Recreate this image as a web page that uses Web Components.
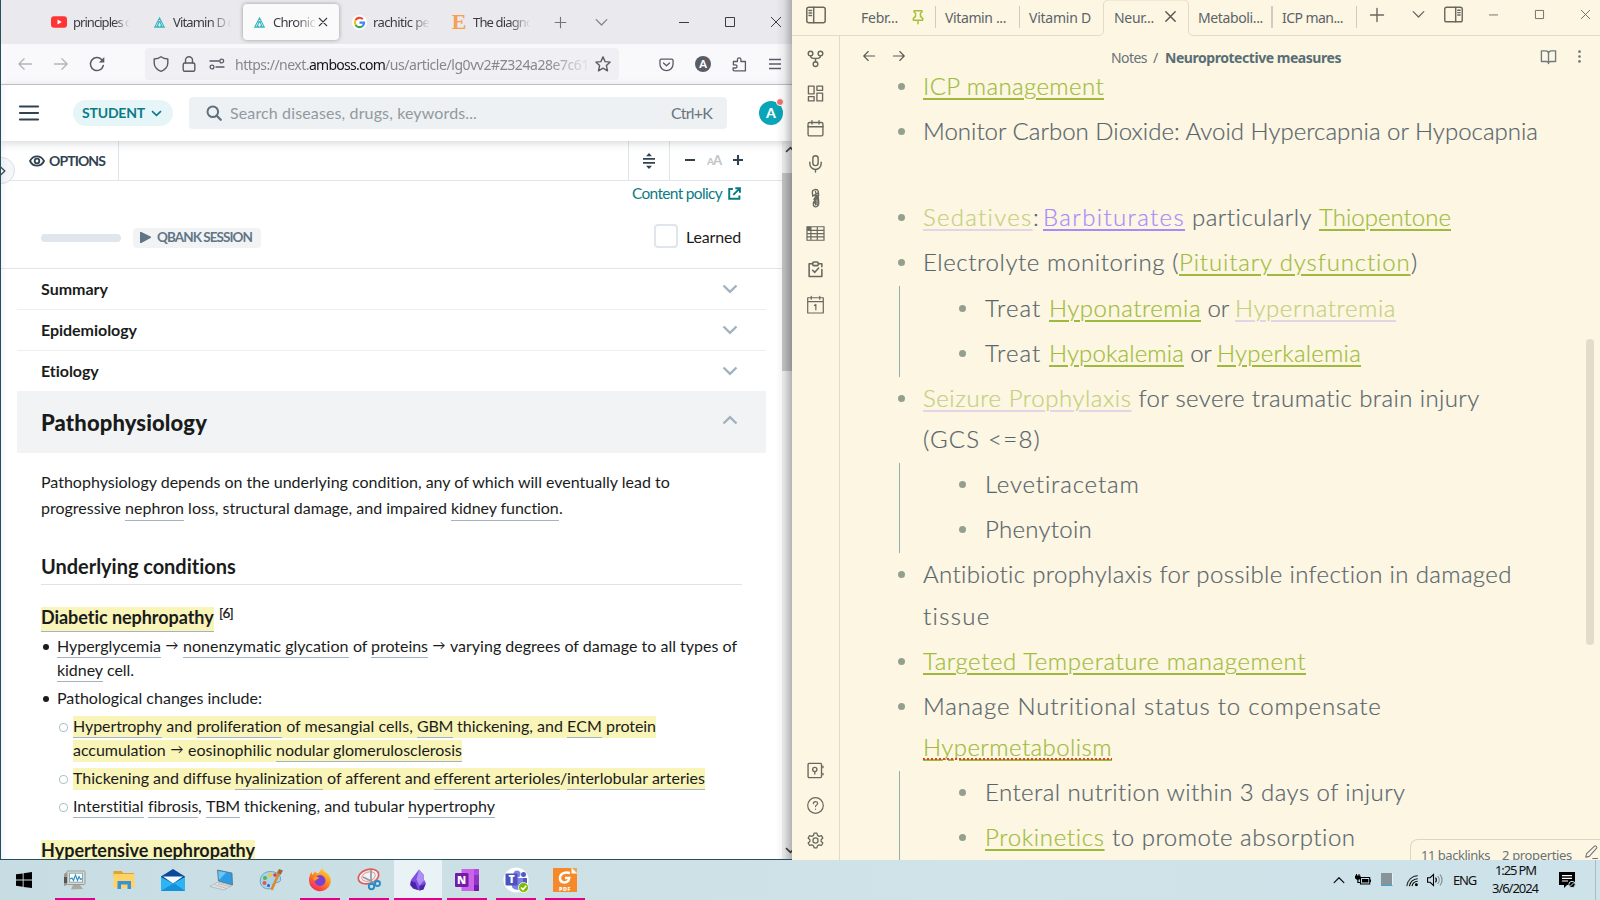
<!DOCTYPE html>
<html lang="en">
<head>
<meta charset="utf-8">
<title>Desktop</title>
<style>
html,body{margin:0;width:1600px;height:900px;overflow:hidden;background:#cde0e6}
</style>
</head>
<body>
<desk-top></desk-top>
<script>
/* ---------- icon set: [viewBox size, body] ---------- */
const OUT='fill="none" stroke="currentColor" stroke-linecap="round" stroke-linejoin="round"';
const I={
back:[16,`<path ${OUT} stroke-width="1.500" d="M15.500 8H1M7 2 1 8 7 14"/>`],
fwd:[16,`<path ${OUT} stroke-width="1.500" d="M.5 8h14.500M9 2 15 8 9 14"/>`],
reload:[16,`<path ${OUT} stroke-width="1.500" d="M14.300 9.500A6.500 6.500 0 1 1 12.700 3.600"/><path fill="currentColor" d="M15.300 1v5.500H9.800z"/>`],
close:[16,`<path ${OUT} stroke-width="1.500" d="m3 3 10 10M13 3 3 13"/>`],
plus:[16,`<path ${OUT} stroke-width="1.400" d="M8 1.500v13M1.500 8h13"/>`],
plusb:[16,`<path stroke="currentColor" stroke-width="3.400" d="M8 0v16M0 8h16"/>`],
minusb:[16,`<path stroke="currentColor" stroke-width="3.200" d="M0 8h16"/>`],
chev:[16,`<path ${OUT} stroke-width="1.600" d="m1.500 4.500 6.500 6.500 6.500-6.500"/>`],
chevu:[16,`<path ${OUT} stroke-width="1.600" d="m1.500 11.500L8 5l6.500 6.500"/>`],
chevb:[16,`<path fill="none" stroke="currentColor" stroke-width="2.400" d="m1.500 4.500 6.500 6.300 6.500-6.300"/>`],
chevub:[16,`<path fill="none" stroke="currentColor" stroke-width="2.400" d="m1.500 11.500L8 5.200l6.500 6.300"/>`],
chevr:[16,`<path ${OUT} stroke-width="2" d="m4 1.500 7 6.500-7 6.500"/>`],
min:[10,`<path stroke="currentColor" d="M0 5.500h10"/>`],
max:[10,`<path fill="none" stroke="currentColor" d="M.5.500h9v9h-9z"/>`],
x:[10,`<path stroke="currentColor" stroke-width="1" d="m0 0 10 10M10 0 0 10"/>`],
yt:[16,`<rect y="2.200" width="16" height="11.600" rx="3" fill="#ff3434"/><path fill="#fff" d="m6.500 5.500 4.300 2.500-4.300 2.500z"/>`],
amb:[12,`<path fill="none" stroke="#35b5bd" stroke-width="1.200" d="M6 1 .8 11h10.400zM6 4.500 3 11M6 4.500 9 11M3.700 8.500 5 11M8.300 8.500 7 11M4.500 5.500h3"/>`],
goog:[16,`<circle cx="8" cy="8" r="8" fill="#fff"/><g fill="none" stroke-width="2.300"><path stroke="#ea4335" d="M3.800 5.400a4.900 4.900 0 0 1 7.700-1"/><path stroke="#fbbc05" d="M3.800 10.600a5 5 0 0 1 0-5.200"/><path stroke="#34a853" d="M11.300 11.700a4.900 4.900 0 0 1-7.500-1.100"/><path stroke="#4285f4" d="M8 8.100h4.900a4.900 4.900 0 0 1-1.600 3.600"/></g>`],
enc:[16,`<text x="8" y="15" text-anchor="middle" font-family="Liberation Serif,serif" font-size="22" font-weight="bold" fill="#f6a050">E</text>`],
shield:[16,`<path ${OUT} stroke-width="1.400" d="M8 .8C6 2.300 3.500 2.900 1.200 3v4.200C1.200 11 4.500 14.300 8 15.300c3.500-1 6.800-4.300 6.800-8.100V3C12.500 2.900 10 2.300 8 .8z"/>`],
lock:[16,`<rect ${OUT} stroke-width="1.400" x="2.200" y="7" width="11.600" height="8.300" rx="1.500"/><path ${OUT} stroke-width="1.400" d="M4.500 7V4.200a3.500 3.500 0 0 1 7 0V7"/>`],
tune:[16,`<g ${OUT} stroke-width="1.300"><path d="M1 5h9M7 11h8"/><circle cx="12.700" cy="5" r="1.900"/><circle cx="3" cy="11" r="1.900"/></g>`],
star:[16,`<path ${OUT} stroke-width="1.400" d="m8 .9 2.100 4.700 5.100.5-3.800 3.500 1.100 5.200L8 12.200l-4.500 2.600 1.100-5.200L.8 6.100l5.100-.5z"/>`],
pocket:[16,`<g ${OUT} stroke-width="1.400"><path d="M2.500 2.200h11c.8 0 1.500.6 1.500 1.400v3.900a7 7 0 0 1-14 0V3.600c0-.8.700-1.400 1.500-1.400z"/><path d="m4.800 6.400 3.200 3 3.200-3"/></g>`],
acct:[16,`<circle cx="8" cy="8" r="8" fill="currentColor"/><text x="8" y="12" text-anchor="middle" font-family="Lato,sans-serif" font-weight="900" font-size="11" fill="#fff">A</text>`],
puz:[16,`<path ${OUT} stroke-width="1.400" d="M1.500 4.800h4.300V2.700a1.800 1.800 0 0 1 3.700 0v2.100h4.800v10H2.500c-.8 0-1.300-.5-1.300-1.200v-1.900h2.500a1.600 1.600 0 0 0 0-3.300H1.500z"/>`],
burg:[12,`<path stroke="currentColor" stroke-width="1.300" d="M0 1.500h12M0 6h12M0 10.500h12"/>`],
burg2:[20,`<path stroke="currentColor" stroke-width="2.200" stroke-linecap="round" d="M1 3.500h18M1 10h18M1 16.500h18"/>`],
search:[16,`<circle cx="6.800" cy="6.800" r="5.300" fill="none" stroke="currentColor" stroke-width="2"/><path stroke="currentColor" stroke-width="2.300" stroke-linecap="round" d="m11 11 3.700 3.700"/>`],
eye:[16,`<path fill="none" stroke="currentColor" stroke-width="1.800" d="M1 8c1.500-3 4.200-4.700 7-4.700S13.500 5 15 8c-1.500 3-4.200 4.700-7 4.700S2.500 11 1 8z"/><circle cx="8" cy="8" r="2.300" fill="none" stroke="currentColor" stroke-width="1.800"/>`],
sort:[16,`<path stroke="currentColor" stroke-width="1.700" d="M2 5.900h12M2 9.900h12"/><path fill="currentColor" d="M8 0 5 3.200h6zM8 16l-3-3.200h6z"/>`],
ext:[16,`<g fill="none" stroke="currentColor" stroke-width="2.400"><path d="M6 2.500H1.500v12h12.500v-4M9 1.500h5.700V7M14.500 1.700 6.500 9.700"/></g>`],
play:[12,`<path fill="currentColor" d="M0 0h1.500L12 5.300v1L1.500 12H0z"/>`],
lpan:[20,`<g ${OUT} stroke-width="1.500"><rect x=".8" y="2.300" width="18.400" height="15.400" rx="2"/><path d="M7.700 2.300v15.400M3 5.500h2.500M3 8h2.500M3 10.500h2.500"/></g>`],
rpan:[20,`<g ${OUT} stroke-width="1.500"><rect x=".8" y="2.300" width="18.400" height="15.400" rx="2"/><path d="M12.300 2.300v15.400M14.500 5.500H17M14.500 8H17M14.500 10.500H17"/></g>`],
pin:[24,`<path ${OUT} stroke-width="2.200" d="M12 17v5M6 2.500h12v2l-2.300 1.500v5L19 14v3H5v-3l3.300-3V6L6 4.500z"/>`],
book:[24,`<path ${OUT} stroke-width="1.900" d="M2 4h6a4 4 0 0 1 4 3.500A4 4 0 0 1 16 4h6v15h-7a3 3 0 0 0-3 3 3 3 0 0 0-3-3H2zM12 7.500V22"/>`],
dots:[24,`<g fill="currentColor"><circle cx="12" cy="3" r="2.500"/><circle cx="12" cy="12" r="2.500"/><circle cx="12" cy="21" r="2.500"/></g>`],
fork:[24,`<g ${OUT} stroke-width="2"><circle cx="5" cy="5" r="3.300"/><circle cx="19" cy="5" r="3.300"/><circle cx="12" cy="20" r="3.300"/><path d="M5 8.300c0 3 2 3.700 7 3.700s7-.7 7-3.700M12 12v4.500"/></g>`],
dash:[24,`<g ${OUT} stroke-width="1.900"><path d="M2 1.500h8v11H2zM14 1.500h8v6h-8zM14 11.500h8v11h-8zM2 16.500h8v6H2z"/></g>`],
cal:[24,`<g ${OUT} stroke-width="1.900"><rect x="1.500" y="3.500" width="21" height="19" rx="2"/><path d="M1.500 9.500h21M7 .8v5M17 .8v5"/></g>`],
mic:[24,`<g ${OUT} stroke-width="2"><rect x="8.300" y="1" width="7.400" height="14" rx="3.700"/><path d="M4 10v2.500a8 8 0 0 0 16 0V10M12 20.500V24"/></g>`],
knot:[24,`<g ${OUT} stroke-width="1.700"><path d="M8.500 9 8 4C8 .500 14-1 15.500 3L16 8l-6 8c-2 3-.5 7 2.500 6.500s4-3 3.500-6L15.500 9M12 3 14 13M8.500 9l7-4M10 13l6-6M12 9l-2 9M12 15v5M14 12v8"/></g>`],
table:[24,`<g fill="none" stroke="currentColor" stroke-width="1.700"><path d="M0 2.500h24v19H0zM0 7.500h24M0 12.200h24M0 16.800h24M5.500 2.500v19M14.500 2.500v19"/></g><path fill="currentColor" d="M0 2.500h5.500v5H0z"/>`],
clip:[24,`<g ${OUT} stroke-width="2.200"><path d="M8 4H3v18h18V12M16 4h5v4"/><rect x="8" y="1.500" width="8" height="5" rx="2"/><path d="m8 13 3 3 5.500-6"/></g>`],
cal1:[24,`<g ${OUT} stroke-width="1.700"><path d="M1 2.500h22v21.500H1zM1 8h22M6 .5v4M18 .5v4M10.500 13.500 12.500 12v7.500"/></g>`],
vault:[24,`<g ${OUT} stroke-width="1.900"><rect x="1.500" y="2" width="19" height="20" rx="1.500"/><circle cx="11" cy="10.500" r="3"/><path d="M11 13.500V17M22.500 6v2M22.500 16v2"/></g>`],
help:[24,`<g ${OUT} stroke-width="1.700"><circle cx="12" cy="12" r="11"/><path d="M9 9.500C9 5.500 15 5.800 15 9c0 2.300-3 2.300-3 4.500M12 17v.3"/></g>`],
gear:[24,`<g ${OUT} stroke-width="1.800"><circle cx="12" cy="12" r="3.600"/><path d="M10 1.500h4l.8 3.300 2.300 1.300 3.300-.9 2 3.400-2.500 2.300v2.400l2.500 2.300-2 3.400-3.300-.9-2.300 1.300L14 22.500h-4l-.8-3.100-2.300-1.300-3.300.9-2-3.400 2.500-2.300v-2.400L1.600 8.600l2-3.400 3.300.9 2.300-1.300z"/></g>`],
pen:[16,`<path ${OUT} stroke-width="1.200" d="m2 14 1-4.200L12 1.200c1-1 3.500 1.200 2.500 2.400L6 13zM10 15.400h5.500"/>`],
/* taskbar */
win:[24,`<path fill="#000" d="M4 6.300 10.700 5.400V11.600H4zM11.600 5.200 20 4v7.600h-8.400zM4 12.500h6.700v6.200L4 17.800zM11.600 12.500H20V20l-8.400-1.100z"/>`],
mon:[24,`<path fill="#9a9a94" d="M1 6l3-2v13l-3 1z"/><rect x="4" y="3" width="18" height="13.500" rx="1" fill="#d9dad6" stroke="#9b9c98"/><rect x="6.500" y="5.200" width="13" height="9" fill="#f5fbff" stroke="#8aa"/><path fill="none" stroke="#2b8cbe" stroke-width="1.100" d="m7 11 2-1 1.500 2.500L12.500 7l2 5.500 1.500-4 1.500 3 1.500-1"/><path fill="#aaa9a4" d="M10 17h7l3 4-12 .5z"/><path fill="#555" d="M1 9h3v6H1z"/>`],
fold:[24,`<path fill="#e0a32c" d="M1.500 3h8l2 2H22v4H1.500z"/><path fill="#ffd466" d="M1.500 6H22.500v14H1.500z"/><path fill="#3a91d8" d="M5.500 13h13.500v8h-3.500v-4.500h-6.500V21H5.500z"/>`],
mail:[24,`<path fill="#0a4a9a" d="M12 1 24 8.500v2L12 16 0 10V8.500z"/><path fill="#f6f9fc" d="M2 8.500h20l-10 7z"/><path fill="#2fb4f3" d="M0 9 12 15.500l12-6.500V23H0z"/><path fill="#1590dc" d="m0 23 13-8 11 8z"/>`],
lap:[24,`<path fill="#2c9be8" stroke="#566" stroke-width=".7" d="m7.500 2 14.500 3 .5 12L8.500 13z"/><path fill="#6cc5f8" d="m8.200 3 8 1.600L9 12z"/><path fill="#dfe3e6" stroke="#999" stroke-width=".5" d="m8 14 14 3.500-8 4.500L0 18.500z"/><path stroke="#aaa" stroke-width=".7" d="m5 17 12 3.500M8 15.700l12 2.800"/>`],
paint:[24,`<path fill="#a9d3ea" stroke="#5f95b5" stroke-width=".8" d="M11.500 3.500C4 3.500.8 9 1.200 14c.3 5 6 8 10.500 6.500 3-1 1-3.500 3-5s7 0 7-4.500-5-7.500-10.200-7.500z"/><circle cx="6" cy="10" r="2" fill="#4db848"/><circle cx="11" cy="7" r="2" fill="#f7c92e"/><circle cx="16" cy="7" r="1.800" fill="#e33b32"/><circle cx="5.500" cy="15" r="2" fill="#e9573c"/><circle cx="9.500" cy="17.500" r="1.500" fill="#345ccc"/><path stroke="#dc8a2b" stroke-width="2.500" stroke-linecap="round" d="m13 21 6.500-15"/><path fill="#a0673a" d="M18 4.500 20 1 24 2.500 21.500 7z"/>`],
ff:[24,`<defs><linearGradient id="f" x1=".9" y1="0" x2=".3" y2="1"><stop offset="0" stop-color="#ffe14a"/><stop offset=".5" stop-color="#ff8a1e"/><stop offset="1" stop-color="#f3235c"/></linearGradient></defs><path fill="url(#f)" d="M14 0c1 3 4 4 6 6 2 2.500 3.500 5 2.500 9.500A11 11 0 0 1 1 13C.8 9 2 6 3.500 4l1 3L7 3.500l2.500 2.300c1-.5 3-2.800 4.500-5.800z"/><circle cx="12" cy="12.500" r="5.400" fill="#7a3fd3"/><path fill="#ff9d1f" d="M5.500 10c2-2 4.500-1.500 6 .300-1.500.2-3 1-3.500 2-.6 1.300-2.500 0-2.500-2.300z"/>`],
snip:[24,`<ellipse cx="11.500" cy="8.500" rx="10.500" ry="7" fill="#f6f1f1" stroke="#d95e5e" stroke-width="1.700" transform="rotate(-18 11.500 8.500)"/><ellipse cx="11.500" cy="8.500" rx="7" ry="4.500" fill="none" stroke="#d99" transform="rotate(-18 11.500 8.500)"/><path stroke="#8f9ba3" stroke-width="1.700" d="M14 2v13M6 9l12 6"/><circle cx="14.500" cy="18.500" r="2.700" fill="none" stroke="#2a8bc9" stroke-width="1.900"/><circle cx="20.500" cy="15.500" r="2.500" fill="none" stroke="#2a8bc9" stroke-width="1.900"/>`],
obs:[24,`<path fill="#7c4fe0" d="m13 1.500 4.500 5 .5 5 2 4-3 6-3.500 1-6.500-2-3-3.500 1-5L8 8z"/><path fill="#b08cf5" d="m13 1.500-2.500 10 3 6 4.500-5-.5-6z"/><path fill="#4b25a5" d="m5 13 4.500 1.500L12 22l-4.500-1.500-3-3.500zM13.500 18l6-2-2 5.500-4 1z"/>`],
one:[24,`<path fill="#ca64ea" d="M6.500 1H24v22H6.500z"/><path fill="#9332bf" d="M19 6.500h5V17h-5z"/><path fill="#7719aa" d="M19 17h5v6h-5z"/><path fill="#ad4be0" d="M19 1h5v5.500h-5z"/><rect y="5" width="13.500" height="14" rx="1" fill="#7719aa"/><text x="6.700" y="16" text-anchor="middle" font-family="Open Sans,sans-serif" font-weight="800" font-size="11" fill="#fff">N</text>`],
teams:[26,`<circle cx="13" cy="13" r="12.500" fill="#fff"/><circle cx="14" cy="7" r="3.500" fill="#7b83eb"/><circle cx="20.500" cy="7.500" r="2.500" fill="#5059c9"/><path fill="#5059c9" d="M16 11h8v6c0 4-6 5-8 2z"/><path fill="#7b83eb" d="M8 11h12v8c0 5-11 5-11 0z"/><rect x="2.500" y="6.500" width="12" height="12" rx="1" fill="#4b53bc"/><text x="8.500" y="16.200" text-anchor="middle" font-family="Open Sans,sans-serif" font-weight="800" font-size="10.500" fill="#fff">T</text><circle cx="20.500" cy="20.500" r="5" fill="#7fba00" stroke="#fff" stroke-width=".8"/><path fill="none" stroke="#fff" stroke-width="1.600" d="m18 20.500 2 2 3.200-3.800"/>`],
foxit:[24,`<path fill="#f6892a" d="M0 0h18l6 6v18H0z"/><path fill="#fff" d="m18.500 0 5.500 5.500h-5.500z"/><path fill="#f9a04f" d="M19 0h5v5z"/><path fill="none" stroke="#fff" stroke-width="2.400" d="M17 5C10 3 6.500 7 7 11c.5 4 6.500 4.500 8.500 1.500L16.200 10H12"/><text x="12" y="22.500" text-anchor="middle" font-family="Open Sans,sans-serif" font-weight="800" font-size="5.500" letter-spacing=".5" fill="#fff">PDF</text>`],
batt:[16,`<path fill="none" stroke="#000" stroke-width="1.100" d="M5.500 5.500h9.200v6.500H5.500z"/><path fill="#000" d="M7 7h6.400v3.500H7zM15 7.500h1v2.500h-1zM0 3.500h5.500v2c0 1.500-1 2.200-2 2.200V10h2v1H2.300V7.700C1 7.500 0 7 0 5.500zM1 2h1v2H1zM3.500 2h1v2h-1z"/>`],
wifi:[16,`<g fill="none" stroke="#000" stroke-width="1.200"><path d="M2 15A13 13 0 0 1 14.500 3" opacity=".8"/><path d="M5 15a10 10 0 0 1 9.500-8.500M8 15a7 7 0 0 1 6.500-5.500"/></g><circle cx="13" cy="13.500" r="1.700"/>`],
spk:[16,`<path fill="none" stroke="#000" stroke-width="1.100" d="M.6 5.700h2.500L6.500 2.500v11L3.100 10.300H.6z"/><g fill="none" stroke="#000" stroke-width="1.100"><path d="M8.500 5.700c1 1.300 1 3.300 0 4.600"/><path d="M10.700 4c2 2.300 2 5.700 0 8M13 2.500c2.700 3 2.700 8 0 11" opacity=".4"/></g>`],
note:[16,`<path fill="#000" d="M0 0h16v13H8l-3 3v-3H0z"/><path stroke="#fff" stroke-width="1.200" d="M3 3.600h10M3 6.300h10M3 9h6"/><circle cx="13" cy="12.500" r="3.200" fill="#000" stroke="#cde0e6"/><path stroke="#cde0e6" d="m11 14.500 4-4"/>`]
};
class UiIcon extends HTMLElement{
  connectedCallback(){
    if(this.shadowRoot)return;
    const [v,b]=I[this.getAttribute('n')],s=this.getAttribute('s')||16;
    this.attachShadow({mode:'open'}).innerHTML=`<style>:host{display:block;flex:none;width:${s}px;height:${s}px}svg{display:block;overflow:visible}</style><svg width="${s}" height="${s}" viewBox="0 0 ${v} ${v}">${b}</svg>`;
  }
}
/* A run of text spread evenly over the width given in "w". */
class FitRun extends HTMLElement{
  connectedCallback(){
    if(this.shadowRoot)return;
    const w=+this.getAttribute('w');
    this.attachShadow({mode:'open'}).innerHTML=`<style>:host{display:block;flex:none;width:${w}px;white-space:pre}span{text-decoration:var(--deco,none);text-underline-offset:var(--off,3px)}</style><span><slot></slot></span>`;
    const sp=this.shadowRoot.querySelector('span'),n=[...this.textContent].length;
    sp.style.letterSpacing=((w-sp.getBoundingClientRect().width)/n)+'px';
  }
}
const t=(w,s,st='',c='')=>`<fit-run w="${w}" class="${c}" style="${st}">${s}</fit-run>`;
const ic=(n,s,st='')=>`<ui-icon n="${n}" s="${s}" style="${st}"></ui-icon>`;
/* Flex children with the gaps between their left edges: [start, width, markup] */
const row=(x0,items)=>{let p=x0;return items.map(([x,w,h])=>{const m=x-p;p=x+w;return `<div style="flex:none;width:${w}px;margin-left:${m}px">${h}</div>`}).join('')};
const def=(name,css,html)=>customElements.define(name,class extends HTMLElement{
  constructor(){super();this.attachShadow({mode:'open'}).innerHTML=`<style>:host{display:block;box-sizing:border-box}*{box-sizing:border-box}${css}</style>${html}`}
});

const fade=(a,b)=>`-webkit-mask-image:linear-gradient(90deg,#000 ${a}%,transparent ${b}%);mask-image:linear-gradient(90deg,#000 ${a}%,transparent ${b}%)`;
def('fx-tabs',`:host{height:44px;background:#eae9ee;display:flex;align-items:center;font:13px/20px "Noto Sans",sans-serif;color:#3c3b44;position:relative}
 .act{display:flex;align-items:center;width:96px;height:36px;border-radius:4px;background:#fafafb;box-shadow:0 0 4px rgba(0,0,0,.35)}`,
 row(1,[[51,16,ic('yt',16)],[73,59,t(59,'principles o',fade(70,96))],[154,11,ic('amb',11)],[173,60,t(60,'Vitamin D c',fade(62,98))],
 [243,96,`<div class="act">${row(243,[[254,11,ic('amb',11)],[273,44,t(42,'Chronic',fade(55,106))],[317,12,ic('close',12)]])}</div>`],
 [352,15,ic('goog',15)],[373,59,t(59,'rachitic pel',fade(65,96))],[451,16,ic('enc',16)],[473,60,t(60,'The diagno',fade(60,96))],
 [554,13,ic('plus',13,'color:#75747c')],[595,13,ic('chev',13,'color:#85848c')],[679,10,ic('min',10)],[725,10,ic('max',10)],[771,10,ic('x',10)]]));
def('fx-toolbar',`:host{height:41px;background:#f9f9fb;border-bottom:1px solid #c6c6ca;display:flex;align-items:center;color:#5b5b66}
 .url{display:flex;align-items:center;height:32px;background:#f0eff4;border-radius:4px}.u{display:flex;color:#86868f;font:14px/20px "Noto Sans",sans-serif;padding-top:2px}`,
 row(1,[[18,14,ic('back',14,'color:#b4b4ba')],[54,14,ic('fwd',14,'color:#b4b4ba')],[89,16,ic('reload',16)],
 [145,474,`<div class="url">${row(145,[[153,16,ic('shield',16)],[181,16,ic('lock',16)],[209,16,ic('tune',16)],
 [235,354,`<div class="u" style="${fade(88,101)}">${t(74,'https://next.')}${t(76,'amboss.com','color:#15141a')}${t(204,'/us/article/lg0vv2#Z324a28e7c61')}</div>`],[595,16,ic('star',16)]])}</div>`],
 [659,15,ic('pocket',15)],[695,16,ic('acct',16)],[732,15,ic('puz',15)],[769,12,ic('burg',12)]]));
def('am-header',`:host{height:56px;background:#fff;display:flex;align-items:center;font:16px/20px Lato,sans-serif;color:#314351;box-shadow:0 2px 8px rgba(60,70,80,.22);position:relative;z-index:2}
 .pill{display:flex;align-items:center;height:26px;border-radius:13px;background:#e6f6f8;color:#0b7c86;font-weight:700;font-size:14px}
 .s{display:flex;align-items:center;height:32px;border-radius:4px;background:#edf1f4;color:#93999e}
 .av{width:24px;height:24px;border-radius:12px;background:#0aa5b8;color:#fff;font:900 14px/24px Lato,sans-serif;text-align:center;position:relative}
 .av i{position:absolute;right:-1px;top:-3px;width:6px;height:6px;border-radius:5px;background:#f0716f;border:1.500px solid #fff;box-sizing:content-box}`,
 row(1,[[19,20,ic('burg2',20)],[73,100,`<div class="pill">${row(73,[[82,62,t(63,'STUDENT')],[151,11,ic('chevb',11)]])}</div>`],
 [189,538,`<div class="s">${row(189,[[206,16,ic('search',16,'color:#5c7080')],[230,247,t(247,'Search diseases, drugs, keywords...')],[671,42,t(41,'Ctrl+K','color:#69747e;margin-top:-1px')]])}</div>`],
 [759,24,`<div class="av">A<i></i></div>`]]));
def('am-options',`:host{height:40px;border-bottom:1px solid #dfe5ea;display:flex;background:#fff;font:700 14px/20px Lato,sans-serif;color:#314351;position:relative}
 div{display:flex;align-items:center}.a{width:118px;border-right:1px solid #dfe5ea}.b{margin-left:509px;width:42px;border-left:1px solid #dfe5ea;border-right:1px solid #dfe5ea;justify-content:center}
 .aa{color:#bfc7cd;font-weight:900;align-items:baseline;line-height:16px}
 .k{position:absolute;left:-13px;top:16px;width:27px;height:27px;border:1px solid #d8dee4;border-radius:14px;background:#f4f6f8;justify-content:flex-end;padding-right:6px;z-index:3}`,
 `<div class="a">${row(1,[[29,15,ic('eye',16)],[49,56,t(56,'OPTIONS')]])}</div><div class="b">${ic('sort',16)}</div>
 <div>${row(670,[[685,10,ic('minusb',10,'margin-bottom:1px')],[707,14,`<div class="aa"><span style="font-size:10px">A</span><span style="font-size:13px;margin-left:-1px">A</span></div>`],[733,10,ic('plusb',10,'margin-bottom:1px')]])}</div>
 <div class="k">${ic('chevr',10)}</div>`);
def('acc-item',`:host{display:flex;height:41px;border-bottom:1px solid #eceff1;align-items:center;justify-content:space-between;padding:0 28px 0 24px;font:700 16px/20px Lato,sans-serif;color:#1a1c1c}
 :host([open]){height:62px;background:#f2f3f5;border:0;font-weight:900;font-size:22px;padding-top:2px}:host([last]){height:40px;border:0}
 .c{color:#a3b2bf}:host([open]) .c{margin-bottom:7px}:host([open]) .d,.e{display:none}:host([open]) .e{display:block}`,
 `<slot></slot><span class="c"><span class="d">${ic('chevb',16)}</span><span class="e">${ic('chevub',16)}</span></span>`);
const L=(w,s)=>t(w,s,'','l');
const A='<span style="display:flex;width:22px;justify-content:center;font:13px/19px Lato,sans-serif"> → </span>';
def('am-article',`:host{height:678px;overflow:hidden;background:#fff;font:16px/19px Lato,sans-serif;color:#1a1c1c;width:781px}
 .pol{height:26px;display:flex;align-items:center;color:#0b7c86;font-size:15.500px;padding-bottom:2px}.q{height:62px;display:flex;align-items:center;border-bottom:1px solid #e0e6ea}
 .bar{height:8px;border-radius:4px;background:#e0e6eb}.qb{height:20px;border-radius:4px;background:#f2f3f5;display:flex;align-items:center;font-weight:700;font-size:13.500px;color:#607585}
 .ck{width:24px;height:24px;border:2px solid #e0e6eb;border-radius:4px;margin-bottom:3px}.sec{padding:0 16px}
 .p{display:flex;padding:3px 0 0 24px;height:26px}.l{box-shadow:inset 0 -1px #a3b3c2}
 .h{display:flex}.h fit-run,.h span{background-color:#f9f4b8}
 h2{margin:0 24px;height:64px;padding-top:32px;font:700 20px/26px Lato,sans-serif;border-bottom:1px solid #dfe3e6}
 h3{margin:22px 0 0 24px;height:25px;display:flex;font:700 18px/21px Lato,sans-serif}
 .li{display:flex;height:24px;padding:2px 0 0 40px;position:relative}.s{padding-left:56px}.g{margin-top:4px}
 .li[b]::before,.o::before{content:"";width:6px;height:6px;border-radius:3px;background:#1a1c1c;position:absolute;left:26px;top:10px}
 .li.o::before{background:none;border:1px solid #9fb0bd;left:42px;width:7px;height:7px;border-radius:4px;top:9px;opacity:.8}`,
 `<div class="pol">${row(1,[[632,90,t(90,'Content policy')],[728,13,ic('ext',13)]])}</div>
 <div class="q">${row(1,[[41,80,'<div class="bar"></div>'],[133,128,`<div class="qb">${row(133,[[140,11,ic('play',11)],[157,95,t(95,'QBANK SESSION')]])}</div>`],[654,24,'<div class="ck"></div>'],[686,55,t(55,'Learned','margin-bottom:3px')]])}</div>
 <div class="sec"><acc-item>${t(67,'Summary')}</acc-item><acc-item>${t(96,'Epidemiology')}</acc-item><acc-item last>${t(58,'Etiology')}</acc-item><acc-item open>${t(166,'Pathophysiology')}</acc-item>
 <div class="p" style="margin-top:16px">${t(629,'Pathophysiology depends on the underlying condition, any of which will eventually lead to')}</div>
 <div class="p">${t(84,'progressive ')}${L(59,'nephron')}${t(267,' loss, structural damage, and impaired ')}${L(108,'kidney function')}${t(4,'.')}</div>
 <h2>${t(195,'Underlying conditions')}</h2>
 <h3><span class="h">${L(173,'Diabetic nephropathy')}</span>${t(14,'[6]','font:500 13.500px/13px Lato,sans-serif;margin-left:5px;-webkit-text-stroke:.2px')}</h3>
 <div class="li" b style="margin-top:2px">${L(104,'Hyperglycemia')}${A}${L(166,'nonenzymatic glycation')}${t(22,' of ')}${L(57,'proteins')}${A}${t(287,'varying degrees of damage to all types of')}</div>
 <div class="li">${L(46,'kidney')}${t(31,' cell.')}</div>
 <div class="li g" b>${t(205,'Pathological changes include:')}</div>
 <div class="li s o g h">${L(89,'Hypertrophy')}${t(34.500,' and ')}${L(85.500,'proliferation')}${t(135,' of mesangial cells, ')}${L(36,'GBM')}${t(114,' thickening, and ')}${L(35,'ECM')}${t(54,' protein')}</div>
 <div class="li s h">${t(93,'accumulation')}${A}${t(88,'eosinophilic ')}${L(186,'nodular glomerulosclerosis')}</div>
 <div class="li s o g h">${t(162,'Thickening and diffuse ')}${L(88,'hyalinization')}${t(111,' of afferent and ')}${L(126,'efferent arterioles')}${t(7,'/')}${L(138,'interlobular arteries')}</div>
 <div class="li s o g">${L(71,'Interstitial')}${t(4,' ')}${L(50,'fibrosis')}${t(8,', ')}${L(34,'TBM')}${t(168,' thickening, and tubular ')}${L(87,'hypertrophy')}</div>
 <h3 class="h" style="margin-top:22px">${t(214,'Hypertensive nephropathy')}</h3></div>`);
def('fx-window',`:host{width:792px;height:860px;border-left:1px solid #24505f;border-bottom:1px solid #24505f;position:relative;overflow:hidden;background:#fff}
 .m{display:flex}.m>div{flex:none;width:781px}.sb{width:10px;height:718px;background:#f0f0f0;padding-top:32px;position:relative}.sb i{display:block;height:198px;background:#c6c6c6}
 .sb ui-icon{position:absolute;left:3px;color:#444}.sh{position:absolute;z-index:5;right:0;top:0;width:16px;height:860px;background:linear-gradient(90deg,transparent,rgba(0,0,0,.06) 50%,rgba(0,0,0,.26))}
 .sl{position:absolute;left:0;top:85px;width:6px;bottom:0;background:linear-gradient(90deg,rgba(90,70,120,.06),transparent);z-index:4}`,
 `<fx-tabs></fx-tabs><fx-toolbar></fx-toolbar><am-header></am-header><div class="m"><div><am-options></am-options><am-article></am-article></div><div class="sb">${ic('chevub',11,'top:3px')}<i></i>${ic('chevb',11,'bottom:3px')}</div></div><div class="sh"></div><div class="sl"></div>`);

/* ---------- notes app ---------- */
const up='margin-bottom:7px;color:#68685f;';
const sep='<div style="height:22px;width:1px;background:#d0cbbf;margin-bottom:3px"></div>';
def('ob-tabs',`:host{height:36px;display:flex;align-items:center;font:14px/20px "Noto Sans",sans-serif;color:#5b6468;position:relative}
 .ln{position:absolute;left:0;top:0}`,
 `<svg class="ln" width="808" height="36"><path fill="none" stroke="#e2dbc8" d="M0 35.500h306q5.500 0 5.500-5.500V5q0-5 5.500-5h74q5.500 0 5.500 5v25q0 5.500 5.500 5.500h406"/></svg>`+
 row(792,[[806,20,ic('lpan',20,up)],[861,37,t(37,'Febr...')],[910,16,ic('pin',16,'color:#a6bf3a;margin-bottom:3px')],[935,1,sep],[945,61,t(61,'Vitamin ...')],[1019,1,sep],[1029,62,t(62,'Vitamin D')],
 [1114,40,t(40,'Neur...')],[1163,15,ic('close',15,'color:#55554e;margin-bottom:3px')],[1198,65,t(65,'Metaboli...')],[1271,2,'<div style="height:22px;width:2px;background:#cfccc8;margin-bottom:3px"></div>'],[1282,61,t(61,'ICP man...')],[1356,1,sep],
 [1369,16,ic('plus',16,up)],[1412,13,ic('chev',13,up)],[1444,19,ic('rpan',19,up)],[1489,9,ic('min',9,up)],[1535,9,ic('max',9,up)],[1581,9,ic('x',9,up)]]));
def('ob-head',`:host{height:41px;display:flex;align-items:center;font:14px/20px "Noto Sans",sans-serif;color:#66727a;padding-top:3px}`,
 row(840,[[863,12,ic('back',12,'color:#5c5c55;margin-bottom:4px')],[893,12,ic('fwd',12,'color:#5c5c55;margin-bottom:4px')],[1111,37,t(36,'Notes')],[1153,6,'/'],[1165,176,t(176,'Neuroprotective measures','font-weight:700;color:#586e75')],
 [1540,17,ic('book',17,'color:#6f7a7c;margin-bottom:4px')],[1573,13,ic('dots',13,'color:#6f7a7c;margin-bottom:4px')]]));
def('ob-ribbon',`:host{width:48px;border-right:1px solid #e0dac8;display:flex;flex-direction:column;align-items:center;gap:18.100px;padding:14px 0 11px;color:#68685f}.sp{flex:1}`,
 ['fork','dash','cal','mic','knot','table','clip','cal1'].map(n=>ic(n,n=='knot'?19:17,n=='knot'?'margin:-1px':'')).join('')+'<div class="sp"></div>'+['vault','help','gear'].map(n=>ic(n,17)).join(''));
const K=(w,s)=>t(w,s,'','k'),F=(w,s)=>t(w,s,'','f');
def('ob-note',`:host{height:783px;overflow:hidden;font:300 24px/41px Lato,sans-serif;color:#57656c;width:760px;padding-left:58px;-webkit-text-stroke:.2px currentColor}
 .r{display:flex;height:41px;padding-left:25px;margin-top:4px;position:relative}.w{margin-top:0}.n{padding-left:87px}
 .r[b]::before{content:"";position:absolute;left:0;top:18px;width:7px;height:7px;border-radius:4px;background:#93a08f}.n[b]::before{left:61px!important}
 .gr{padding-top:1px;position:relative}.gr::before{content:"";position:absolute;left:0;top:0;bottom:-4px;width:1px;border-right:1px solid #8fb0ae}.gr.y::before{top:4px}
 .k{color:#9fbc3c;--deco:underline 2px #9fb93f}.f{color:#c3d07d;--deco:underline 2px #e4d5e6}.pu{color:#a78bfa;--deco:underline 2px #a78bfa}
 .e{position:relative}.e::after{content:"";position:absolute;left:0;right:0;top:32px;height:2px;background:repeating-linear-gradient(90deg,#e3402a 0 2px,transparent 2px 4px)}`,
 `<div class="r" b style="margin-top:-12px">${K(181,'ICP management')}</div>
 <div class="r" b>${t(615,'Monitor Carbon Dioxide: Avoid Hypercapnia or Hypocapnia')}</div>
 <div class="r" b style="margin-top:45px">${F(110,'Sedatives')}${t(10,': ')}${t(142,'Barbiturates','','pu')}${t(134,' particularly ')}${K(132,'Thiopentone')}</div>
 <div class="r" b>${t(256,'Electrolyte monitoring (')}${K(232,'Pituitary dysfunction')}${t(8,')')}</div>
 <div class="gr y"><div class="r n" b>${t(64,'Treat ')}${K(152,'Hyponatremia')}${t(34,' or ')}${F(161,'Hypernatremia')}</div>
 <div class="r n" b>${t(64,'Treat ')}${K(135,'Hypokalemia')}${t(33,' or ')}${K(144,'Hyperkalemia')}</div></div>
 <div class="r" b>${F(208.500,'Seizure Prophylaxis')}${t(348.500,' for severe traumatic brain injury')}</div>
 <div class="r w">${t(118,'(GCS &lt;=8)')}</div>
 <div class="gr" style="padding-top:0"><div class="r n" b>${t(155,'Levetiracetam')}</div>
 <div class="r n" b>${t(107,'Phenytoin')}</div></div>
 <div class="r" b>${t(590,'Antibiotic prophylaxis for possible infection in damaged')}</div>
 <div class="r w" style="padding-top:1px">${t(68,'tissue')}</div>
 <div class="r" b style="margin-top:5px">${K(383,'Targeted Temperature management')}</div>
 <div class="r" b>${t(459,'Manage Nutritional status to compensate')}</div>
 <div class="r w">${t(189,'Hypermetabolism','','k e')}</div>
 <div class="gr" style="padding-top:0"><div class="r n" b>${t(421,'Enteral nutrition within 3 days of injury')}</div>
 <div class="r n" b>${K(120,'Prokinetics')}${t(251,' to promote absorption')}</div></div>`);
def('ob-status',`:host{width:191px;height:22px;overflow:hidden;border:1px solid #ddd6c4;border-right:0;border-bottom:0;border-radius:8px 0 0 0;background:#fdf6e3;display:flex;align-items:flex-start;padding-top:5px;font:13px/20px "Noto Sans",sans-serif;color:#6a7377}`,
 row(1410,[[1420,69,t(69,'11 backlinks')],[1501,70,t(70,'2 properties')],[1583,14,ic('pen',14)]]));
def('ob-window',`:host{width:808px;height:860px;background:#fdf6e3;overflow:hidden;position:relative}.b{display:flex;height:824px}.m{width:760px}
 i{position:absolute;left:794px;top:339px;width:8px;height:306px;border-radius:4px;background:#e3dcca}ob-status{position:absolute;left:618px;top:839px}`,
 `<ob-tabs></ob-tabs><div class="b"><ob-ribbon></ob-ribbon><div class="m"><ob-head></ob-head><ob-note></ob-note></div></div><i></i><ob-status></ob-status>`);

/* ---------- taskbar ---------- */
const task=(n,on,act)=>`<div class="t${on?' on':''}${act?' act':''}">${ic(n,n=='teams'?26:24)}</div>`;
def('win-taskbar',`:host{height:40px;display:flex;align-items:center;background:linear-gradient(90deg,#c8dde3,#cfe3e8 60%,#cde2e9);font:13px/18px "Noto Sans",sans-serif;color:#111}
 .g{display:flex;gap:1px;width:594px}.t{flex:none;width:48px;height:40px;display:flex;align-items:center;justify-content:center;border-bottom:1px solid transparent;position:relative}.t:first-child{margin-right:2px}
 .t.on::after{content:"";position:absolute;left:4px;right:4px;bottom:-1px;height:2px;background:#e3008c}.act{background:#e9f2f4}.t.act::after{left:0;right:0}
 .dt{line-height:18px;margin-top:-2px}`,
 `<div class="g">${task('win')}${task('mon',1)}${task('fold')}${task('mail')}${task('lap')}${task('paint')}${task('ff',1)}${task('snip',1)}${task('obs',1,1)}${task('one',1)}${task('teams',1)}${task('foxit',1)}</div>`+
 row(594,[[1333,12,ic('chevu',12)],[1355,16,ic('batt',16)],[1381,12,'<div style="width:12px;height:13px;background:#899498;border-bottom:1px solid #35a7e8;border-right:1px solid #eee;margin-bottom:1px"></div>'],
 [1405,14,ic('wifi',14)],[1427,16,ic('spk',16)],[1453,23,t(23,'ENG','margin-top:-1px')],[1492,46,`<div class="dt"><div style="padding-left:3px">${t(41,'1:25 PM')}</div>${t(46,'3/6/2024')}</div>`],[1559,16,ic('note',16)],[1595,1,'<div style="height:40px;background:#a9bcc2"></div>']]));
def('desk-top',`:host{width:1600px;height:900px;overflow:hidden}.w{display:flex}`,`<div class="w"><fx-window></fx-window><ob-window></ob-window></div><win-taskbar></win-taskbar>`);
customElements.define('ui-icon',UiIcon);
customElements.define('fit-run',FitRun);
</script>
</body>
</html>
